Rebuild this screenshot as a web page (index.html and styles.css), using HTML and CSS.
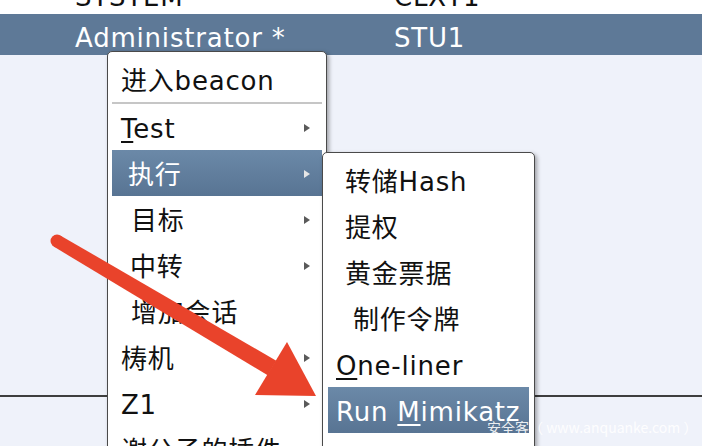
FILE: index.html
```html
<!DOCTYPE html>
<html lang="zh-CN">
<head>
<meta charset="utf-8">
<title>Beacon menu</title>
<link rel="stylesheet" href="styles.css">
</head>
<body>
<div class="app">
  <div class="table">
    <div class="row">
      <span class="cell">SYSTEM</span>
      <span class="cell">CLXT1</span>
    </div>
    <div class="row selected">
      <span class="cell">Administrator *</span>
      <span class="cell">STU1</span>
    </div>
    <div class="empty"></div>
    <div class="rule"></div>
    <div class="rest"></div>
  </div>

  <div class="menu menu-main">
    <div class="item">进入beacon</div>
    <div class="separator"></div>
    <div class="item has-sub"><span><u>T</u>est</span><i class="caret"></i></div>
    <div class="item has-sub active"><span class="ind-7">执行</span><i class="caret"></i></div>
    <div class="item has-sub"><span class="ind-10">目标</span><i class="caret"></i></div>
    <div class="item has-sub"><span class="ind-9">中转</span><i class="caret"></i></div>
    <div class="item"><span class="ind-10">增加会话</span></div>
    <div class="item has-sub"><span>梼机</span><i class="caret"></i></div>
    <div class="item has-sub"><span>Z1</span><i class="caret"></i></div>
    <div class="item has-sub"><span>谢公子的插件</span><i class="caret"></i></div>
  </div>

  <div class="menu menu-sub">
    <div class="item"><span class="ind-9">转储Hash</span></div>
    <div class="item"><span class="ind-9">提权</span></div>
    <div class="item"><span class="ind-9">黄金票据</span></div>
    <div class="item"><span class="ind-17">制作令牌</span></div>
    <div class="item"><span><u>O</u>ne-liner</span></div>
    <div class="item active"><span>Run <u>M</u>imikatz</span></div>
    <div class="item"><span>Spawn As</span></div>
  </div>

  <svg class="arrow" width="702" height="446" viewBox="0 0 702 446" aria-hidden="true">
    <circle cx="57" cy="241" r="6.5" fill="#e9432b"/>
    <polygon points="53.7,246.6 60.3,235.4 276.3,360.7 267.7,375.3" fill="#e9432b"/>
    <polygon points="287,342 316,396 255,395" fill="#e9432b"/>
  </svg>

  <div class="watermark">安全客（ www.anquanke.com ）</div>
</div>
</body>
</html>
```

FILE: styles.css
```css
html, body {
  margin: 0;
  padding: 0;
}
body {
  width: 702px;
  height: 446px;
  overflow: hidden;
  background: #eff2fa;
  font-family: "DejaVu Sans", "Noto Sans CJK SC", sans-serif;
}
.app {
  position: relative;
  width: 702px;
  height: 446px;
  overflow: hidden;
}
.table {
  margin-top: -27px;
}
.row {
  display: grid;
  grid-template-columns: 319px 1fr;
  padding: 7px 0 0 75px;
  height: 41px;
  box-sizing: border-box;
  line-height: 34px;
  font-size: 26px;
  letter-spacing: 0.8px;
  background: #ffffff;
  color: #111;
}
.row.selected {
  background: #5e7997;
  color: #ffffff;
}
.empty {
  height: 340px;
  background: #eff2fa;
}
.rule {
  height: 2px;
  background: #3e3e3e;
}
.rest {
  height: 80px;
  background: #eff2fa;
}

.menu {
  position: absolute;
  box-sizing: border-box;
  background: #ffffff;
  border: 1px solid #4a4a4a;
  border-radius: 5px 5px 0 0;
  box-shadow: 2px 2px 4px rgba(0, 0, 0, 0.35);
  font-size: 26px;
  letter-spacing: 0.8px;
  color: #111;
}
.menu-main {
  left: 107px;
  top: 51px;
  width: 220px;
  padding: 4px 4px;
}
.menu-sub {
  left: 322px;
  top: 152px;
  width: 213px;
  padding: 4px 5px;
}
.item {
  display: flex;
  align-items: center;
  justify-content: space-between;
  box-sizing: border-box;
  height: 46px;
  line-height: 46px;
  padding: 4px 12px 0 9px;
  white-space: nowrap;
}
.menu-sub .item {
  padding-left: 8px;
}
.item.active {
  background: linear-gradient(#6b89a8, #587493);
  color: #ffffff;
}
.separator {
  height: 2px;
  background: #c6c6c6;
  margin: 0;
}
.caret {
  display: block;
  width: 0;
  height: 0;
  margin-bottom: 3px;
  border-left: 6px solid #5a5a5a;
  border-top: 4px solid transparent;
  border-bottom: 4px solid transparent;
}
.item.active .caret {
  border-left-color: #e6e6e6;
}
u {
  text-decoration-thickness: 2px;
  text-underline-offset: 3px;
}
.ind-7 { padding-left: 7px; }
.ind-9 { padding-left: 9px; }
.ind-10 { padding-left: 10px; }
.ind-17 { padding-left: 17px; }

.arrow {
  position: absolute;
  left: 0;
  top: 0;
  pointer-events: none;
}
.watermark {
  position: absolute;
  left: 487px;
  top: 417px;
  font-family: "Noto Sans CJK SC", "DejaVu Sans", sans-serif;
  font-size: 14px;
  line-height: 20px;
  color: rgba(255, 255, 255, 0.9);
  white-space: nowrap;
}
```
